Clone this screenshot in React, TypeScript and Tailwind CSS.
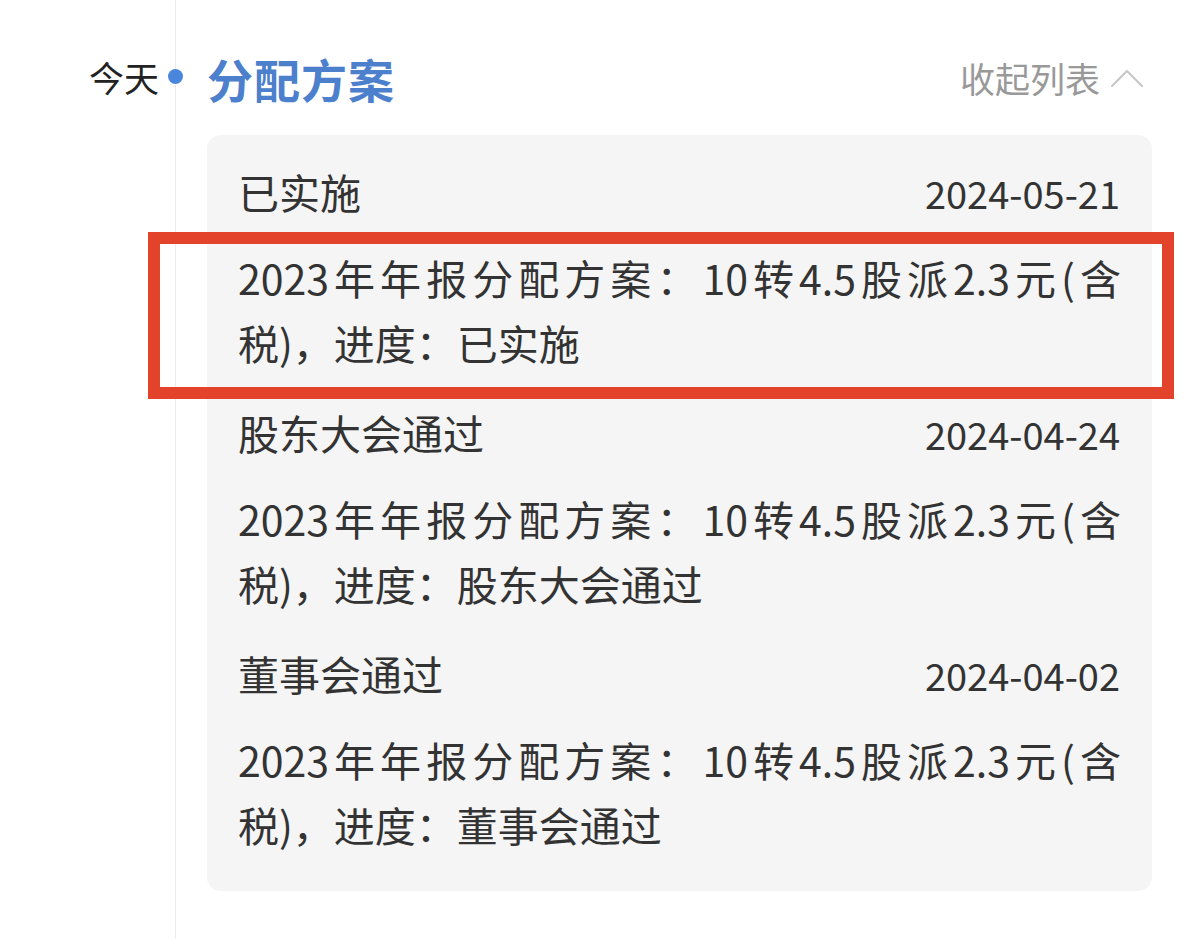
import React from "react";

type Step = {
  status: string;
  date: string;
  lines: [string, string];
  highlight?: boolean;
};

const steps: Step[] = [
  {
    status: "已实施",
    date: "2024-05-21",
    lines: ["2023年年报分配方案：10转4.5股派2.3元(含", "税)，进度：已实施"],
    highlight: true,
  },
  {
    status: "股东大会通过",
    date: "2024-04-24",
    lines: ["2023年年报分配方案：10转4.5股派2.3元(含", "税)，进度：股东大会通过"],
  },
  {
    status: "董事会通过",
    date: "2024-04-02",
    lines: ["2023年年报分配方案：10转4.5股派2.3元(含", "税)，进度：董事会通过"],
  },
];

const font = { fontFamily: '"Noto Sans CJK SC", "Noto Sans", sans-serif' };

export default function App() {
  return (
    <div
      className="w-[1200px] h-[939px] bg-white flex overflow-hidden text-[#333] [text-spacing-trim:space-all]"
      style={font}
    >
      {/* left label column */}
      <div className="w-[175px] shrink-0 pt-[55px] pr-[16px] flex justify-end">
        <span className="text-[35px] leading-[44px] text-[#222]">今天</span>
      </div>

      {/* timeline column */}
      <div className="relative flex-1 border-l border-[#ececec] pl-[31px] pr-[48px] pt-[46px]">
        <span className="absolute left-[-8px] top-[69px] w-[15px] h-[15px] rounded-full bg-[#4a86dc]" />

        <div className="flex items-center justify-between h-[64px]">
          <h2 className="text-[46px] font-bold text-[#4c80cc] tracking-[1px]">分配方案</h2>
          <button className="flex items-center gap-[10px] mr-[8px] text-[35px] text-[#999]">
            收起列表
            <svg width="34" height="20" viewBox="0 0 34 20" fill="none">
              <path d="M2 18 L17 3 L32 18" stroke="#c8c8c8" strokeWidth="2.2" strokeLinecap="round" strokeLinejoin="round" />
            </svg>
          </button>
        </div>

        <div className="mt-[25px] bg-[#f5f5f5] rounded-[14px] px-[31px] pt-[27px] pb-[34px] flex flex-col gap-[28px]">
          {steps.map((s) => (
            <div key={s.date} className="flex flex-col gap-[23px]">
              <div className="flex items-center justify-between h-[60px]">
                <span className="text-[41px]">{s.status}</span>
                <span className="text-[38px] mr-[1px]">{s.date}</span>
              </div>
              <div className="relative text-[41px] leading-[65px]">
                <span className="block text-justify [text-align-last:justify] whitespace-nowrap">{s.lines[0]}</span>
                <span className="block">{s.lines[1]}</span>
                {s.highlight && (
                  <div className="absolute left-[-90px] right-[-53px] top-[-13px] bottom-[-24px] border-[12px] border-[#e2432a] pointer-events-none" />
                )}
              </div>
            </div>
          ))}
        </div>
      </div>
    </div>
  );
}
